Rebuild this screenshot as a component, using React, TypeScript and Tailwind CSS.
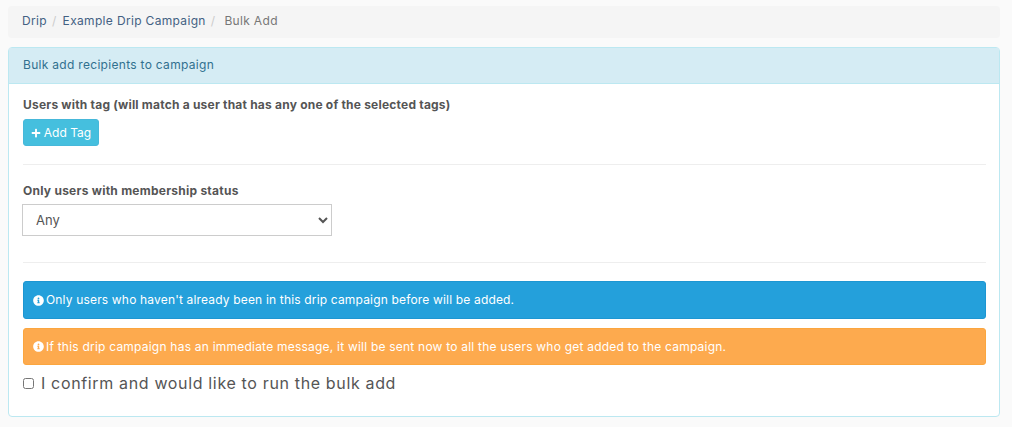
import { FaInfoCircle, FaPlus } from "react-icons/fa";

const font = { fontFamily: "Inter" };

function Divider() {
  return <hr className="border-0 border-t border-[#eeeeee]" />;
}

export default function App() {
  return (
    <div className="flex h-[427px] flex-col overflow-hidden bg-[#fafafa] pr-3 pl-2 pt-[6px] font-['Inter','Liberation_Sans',sans-serif] text-[#555555]">
      <nav className="flex h-8 items-center rounded bg-[#f5f5f5] px-[14px] pb-[2px] text-[12px] tracking-[0.33px]">
        <a className="text-[#436183]">Drip</a>
        <span className="pl-[5px] pr-[6px] text-[#cccccc]">/</span>
        <a className="text-[#436183]">Example Drip Campaign</a>
        <span className="pl-[5px] pr-[9px] text-[#cccccc]">/</span>
        <span className="text-[#777777]">Bulk Add</span>
      </nav>

      <section className="mt-[9px] h-[370px] rounded border border-[#bce8f1] bg-white">
        <header className="flex h-9 items-center border-b border-[#bce8f1] bg-[#d5ecf4] px-[14px] pb-[2px] text-[12px] tracking-[0.3px] text-[#31708f]">
          Bulk add recipients to campaign
        </header>

        <div className="flex flex-col pr-[13px] pl-[14px] pt-[13px]">
          <label className="text-[12px] leading-4 font-bold tracking-[0.21px] text-[#555555]">
            Users with tag (will match a user that has any one of the selected tags)
          </label>
          <button className="mt-[6px] flex h-[27px] w-[76px] items-center justify-center gap-[3px] rounded-[3px] border border-[#46b8da] bg-[#45bfde] text-[12px] text-white">
            <FaPlus className="h-[10px] w-[10px]" />
            Add Tag
          </button>

          <div className="mt-[18px]">
            <Divider />
          </div>

          <label className="mt-[18px] text-[12px] leading-4 font-bold tracking-[0.25px] text-[#555555]">
            Only users with membership status
          </label>
          <select
            style={font}
            className="mt-[5px] -ml-px h-8 w-[310px] rounded-none border border-[#cccccc] bg-white pl-[9px] text-[13px] text-[#555555]"
          >
            <option>Any</option>
          </select>

          <div className="mt-[26px]">
            <Divider />
          </div>

          <div className="mt-[18px] flex h-[38px] items-center gap-[2px] rounded-[3px] border border-[#1d96d2] bg-[#24a0db] px-[9px] text-[12px] tracking-[0.17px] text-white">
            <FaInfoCircle className="h-[11px] w-[11px]" />
            Only users who haven't already been in this drip campaign before will be added.
          </div>
          <div className="mt-[9px] flex h-[37px] items-center gap-[2px] rounded-[3px] border border-[#fba63f] bg-[#fdaa4e] px-[9px] text-[12px] tracking-[0.22px] text-white">
            <FaInfoCircle className="h-[11px] w-[11px]" />
            If this drip campaign has an immediate message, it will be sent now to all the users who get added to the campaign.
          </div>

          <label className="mt-2 flex items-center gap-[7px] text-[16px] leading-5 tracking-[0.65px] text-[#555555]">
            <input type="checkbox" className="h-[11px] w-[11px]" />
            I confirm and would like to run the bulk add
          </label>
        </div>
      </section>
    </div>
  );
}
